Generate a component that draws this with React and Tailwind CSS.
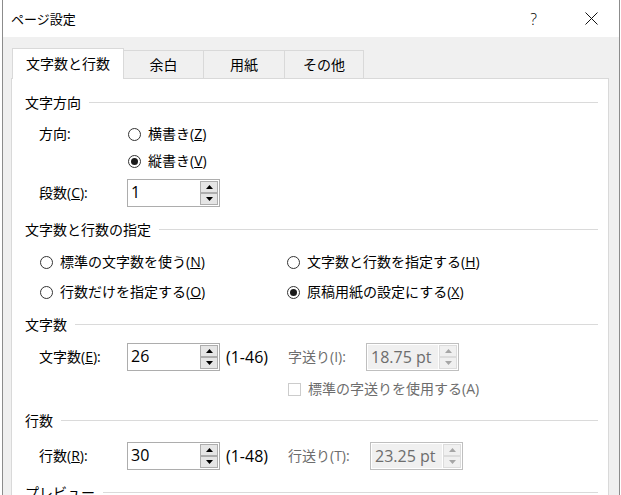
import React from 'react';

const font = { fontFamily: '"Open Sans", "Noto Sans CJK JP", sans-serif' };

function Arrow({ up, disabled }) {
  return (
    <svg width="7" height="4" viewBox="0 0 7 4">
      <path d={up ? 'M0 4 L3.5 0 L7 4 Z' : 'M0 0 L3.5 4 L7 0 Z'} fill={disabled ? '#a6a6a6' : '#000'} />
    </svg>
  );
}

function Spin({ value, disabled }) {
  const btn = disabled
    ? 'flex h-[12px] w-[18px] items-center justify-center border border-[#dcdcdc] bg-[#f0f0f0]'
    : 'flex h-[12px] w-[18px] items-center justify-center border border-[#adadad] bg-[#e5e5e5]';
  return (
    <div className={`flex h-[28px] w-[93px] border ${disabled ? 'border-[#bfbfbf] bg-white' : 'border-[#adadad] bg-white'}`}>
      <div className={`flex-1 pl-[3px] text-[16px] leading-[25px] ${disabled ? 'm-px bg-[#f0f0f0] pl-[2px] text-[#6d6d6d]' : ''}`}>{value}</div>
      <div className="flex flex-col py-px pr-px">
        <div className={btn}><Arrow up disabled={disabled} /></div>
        <div className={btn}><Arrow disabled={disabled} /></div>
      </div>
    </div>
  );
}

function Radio({ checked, children }) {
  return (
    <div className="flex items-center">
      <span className="flex h-[13px] w-[13px] items-center justify-center rounded-full border border-[#333] bg-white">
        {checked && <span className="h-[7px] w-[7px] rounded-full bg-[#1a1a1a]" />}
      </span>
      <span className="ml-[7px]">{children}</span>
    </div>
  );
}

function Header({ children, className = '' }) {
  return (
    <div className={`flex items-center ${className}`}>
      <span>{children}</span>
      <div className="ml-[8px] mt-[-2px] h-px flex-1 bg-[#dadada]" />
    </div>
  );
}

export default function App() {
  return (
    <div className="h-[495px] w-[621px] overflow-hidden bg-white text-[14px] leading-[20px] text-black" style={font}>
      <div className="ml-[2px] flex h-full w-[618px] flex-col border-x border-[#8c8c8c]">
        <div className="flex h-[37px] shrink-0 items-center bg-white">
          <span className="ml-[8px] text-[13px]">ページ設定</span>
          <span className="ml-auto text-[16px] font-light">?</span>
          <svg className="ml-[48px] mr-[21px]" width="13" height="13" viewBox="0 0 13 13">
            <path d="M0.5 0.5 L12.5 12.5 M12.5 0.5 L0.5 12.5" stroke="#111" strokeWidth="1" />
          </svg>
        </div>

        <div className="flex flex-1 flex-col bg-[#f0f0f0] pl-[8px] pr-[10px] pt-[11px]">
          <div className="flex items-end pl-px">
            <div className="relative z-10 -mb-px flex h-[31px] w-[112px] items-center justify-center border border-b-0 border-[#d9d9d9] bg-white">
              文字数と行数
            </div>
            <div className="-ml-px flex h-[28px] w-[81px] items-center justify-center border border-b-0 border-[#d9d9d9]">余白</div>
            <div className="-ml-px flex h-[28px] w-[82px] items-center justify-center border border-b-0 border-[#d9d9d9]">用紙</div>
            <div className="-ml-px flex h-[28px] w-[80px] items-center justify-center border border-b-0 border-[#d9d9d9]">その他</div>
          </div>

          <div className="flex-1 border border-[#d9d9d9] bg-white pl-[13px] pr-[10px] pt-[14px]">
            <Header>文字方向</Header>
            <div className="ml-[14px] mt-[11px] flex">
              <span className="w-[89px]">方向:</span>
              <div>
                <Radio>横書き(<u>Z</u>)</Radio>
                <div className="mt-[7px]"><Radio checked>縦書き(<u>V</u>)</Radio></div>
              </div>
            </div>
            <div className="ml-[14px] mt-[8px] flex items-center">
              <span className="w-[88px]">段数(<u>C</u>):</span>
              <Spin value="1" />
            </div>

            <Header className="mt-[13px]">文字数と行数の指定</Header>
            <div className="ml-[15px] mt-[12px] grid grid-cols-[247px_1fr] gap-y-[10px]">
              <Radio>標準の文字数を使う(<u>N</u>)</Radio>
              <Radio>文字数と行数を指定する(<u>H</u>)</Radio>
              <Radio>行数だけを指定する(<u>O</u>)</Radio>
              <Radio checked>原稿用紙の設定にする(<u>X</u>)</Radio>
            </div>

            <Header className="mt-[13px]">文字数</Header>
            <div className="ml-[14px] mt-[8px] flex items-center">
              <span className="w-[88px]">文字数(<u>E</u>):</span>
              <Spin value="26" />
              <span className="ml-[6px] w-[62px] text-[16px]">(1-46)</span>
              <span className="w-[78px] text-[#6d6d6d]">字送り(I):</span>
              <Spin value="18.75 pt" disabled />
            </div>
            <div className="ml-[263px] mt-[8px] flex items-center text-[#6d6d6d]">
              <span className="h-[13px] w-[13px] border border-[#cccccc] bg-white" />
              <span className="ml-[7px]">標準の字送りを使用する(A)</span>
            </div>

            <Header className="mt-[12px]">行数</Header>
            <div className="ml-[14px] mt-[11px] flex items-center">
              <span className="w-[88px]">行数(<u>R</u>):</span>
              <Spin value="30" />
              <span className="ml-[6px] w-[62px] text-[16px]">(1-48)</span>
              <span className="w-[82px] text-[#6d6d6d]">行送り(T):</span>
              <Spin value="23.25 pt" disabled />
            </div>

            <Header className="mt-[13px]">プレビュー</Header>
          </div>
        </div>
      </div>
    </div>
  );
}
